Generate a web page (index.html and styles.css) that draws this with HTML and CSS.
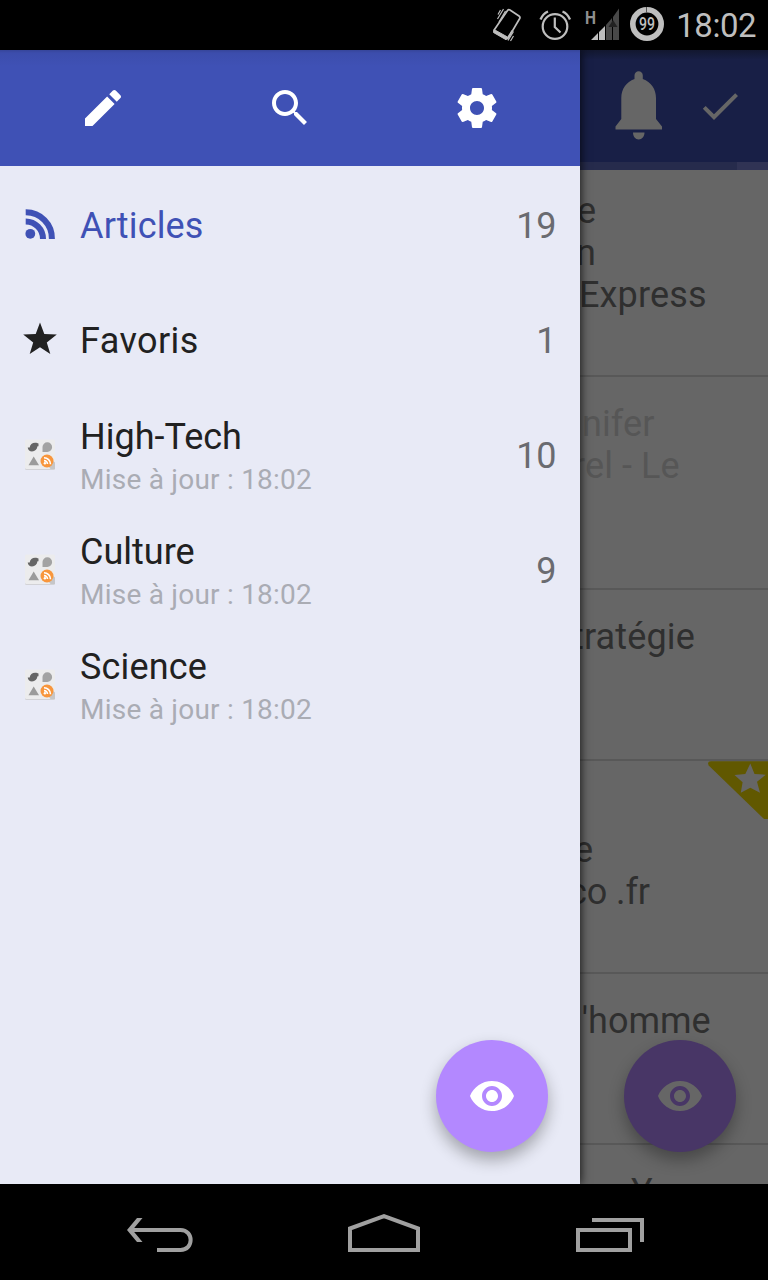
FILE: index.html
```html
<!DOCTYPE html>
<html lang="fr">
<head>
<meta charset="utf-8">
<title>Articles</title>
<link rel="stylesheet" href="styles.css">
</head>
<body>
<svg class="defs" width="0" height="0">
  <symbol id="eye" viewBox="0 0 24 24"><path d="M12 4.5C7 4.500 2.730 7.610 1 12c1.730 4.390 6 7.500 11 7.500s9.270-3.110 11-7.500c-1.730-4.390-6-7.500-11-7.500zM12 17c-2.760 0-5-2.240-5-5s2.240-5 5-5 5 2.240 5 5-2.240 5-5 5zm0-8c-1.660 0-3 1.340-3 3s1.340 3 3 3 3-1.340 3-3-1.340-3-3-3z"/></symbol>
  <symbol id="feed" viewBox="0 0 32 32">
    <rect x="1" y="1.500" width="30" height="29.500" rx="1.500" fill="#d2d2d6"/>
    <rect x="1" y="0.500" width="30" height="29.500" rx="1.500" fill="#ececed"/>
    <path d="M25 28l4-6 2 1.500V30h-4.500z" fill="#c6c6c8"/>
    <path d="M3.700 8.500h2C6 5.500 8.500 3.500 11.500 3.700c1.200 0 2 .6 3 .8v2.800h-1c-.5 3.200-2.500 5.200-5.500 5.200-2.200 0-4-1.500-4.300-4z" fill="#666"/>
    <path d="M18.500 12.900V8a4.800 4.800 0 1 1 4.800 4.900z" fill="#a3a3a3"/>
    <path d="M9.700 17.500l5.300 8.700H4.500z" fill="#9b9b9b"/>
    <circle cx="23" cy="22" r="6.500" fill="#f8963c"/>
    <g fill="none" stroke="#fff" stroke-width="1.600"><path d="M20 18.700a6.500 6.500 0 0 1 6.500 6.500M20 21.600a3.500 3.500 0 0 1 3.500 3.500"/></g>
    <circle cx="20.900" cy="24.300" r="1.200" fill="#fff"/>
  </symbol>
</svg>
<div class="screen">
  <header class="status">
    <svg class="s-phone" width="30" height="50" viewBox="492 0 30 50">
      <path d="M507.500 10.500Q508.500 9.200 510 10L519 16Q520.500 17 519.700 18.500L508.500 37.500Q507.500 39.200 506 38.300L495 32Q493.600 31 494.500 29.500z" fill="none" stroke="#bebebe" stroke-width="1.700"/>
      <path d="M494 29.500L507.500 37 506 39.700 493.500 32.500z" fill="#bebebe" stroke="#bebebe"/>
      <path d="M497.500 19l6-10M499 22l6.500-11M498 14.500l2.500-4.500M508 40.500l5.500-9M510.500 41l3-5M506.500 39.500l5.500-9" fill="none" stroke="#bebebe" stroke-width="1.200"/>
    </svg>
    <svg class="s-alarm" width="34" height="50" viewBox="538 0 34 50" fill="none" stroke="#bebebe">
      <circle cx="555" cy="26.500" r="12.300" stroke-width="2.200"/>
      <path d="M554.800 17.500v9.500l5.700 5.500" stroke-width="2.200"/>
      <path d="M540.500 19.500q2.500-6 7.500-8M570 19.500q-2.500-6-7.500-8" stroke-width="2.300"/>
    </svg>
    <svg class="s-signal" width="36" height="50" viewBox="584 0 36 50">
      <text class="net" x="585" y="23.500" textLength="11" lengthAdjust="spacingAndGlyphs">H</text>
      <path d="M591 40l7-7v7zM599 32l6-6v14h-6z" fill="#bebebe"/>
      <path d="M606 25l6-7v22h-6zM613 17l6-8.500V40h-6z" fill="#484848"/>
      <path d="M613 20l-4.500 7h9z" fill="#222"/>
    </svg>
    <svg class="s-batt" width="36" height="50" viewBox="629 0 36 50">
      <circle cx="647" cy="24" r="14.200" fill="none" stroke="#bebebe" stroke-width="5.600"/>
      <path d="M646.500 7v6" stroke="#555" stroke-width="1"/>
      <text class="pct" x="647" y="29.800" text-anchor="middle" textLength="16" lengthAdjust="spacingAndGlyphs">99</text>
    </svg>
    <span class="clock">18:02</span>
  </header>

  <main class="stage">
    <aside class="drawer">
      <div class="tools">
        <svg width="48" height="48" viewBox="0 0 24 24"><path d="M3 17.250V21h3.750L17.810 9.940l-3.750-3.750L3 17.250zM20.710 7.040c.39-.39.39-1.020 0-1.410l-2.340-2.340c-.39-.39-1.020-.39-1.410 0l-1.830 1.830 3.750 3.750 1.830-1.830z"/></svg>
        <svg width="48" height="48" viewBox="0 0 24 24"><path d="M15.500 14h-.79l-.28-.27C15.410 12.590 16 11.110 16 9.500 16 5.910 13.090 3 9.500 3S3 5.910 3 9.500 5.910 16 9.500 16c1.610 0 3.090-.59 4.230-1.570l.27.28v.79l5 4.990L20.490 19l-4.990-5zm-6 0C7.010 14 5 11.990 5 9.500S7.010 5 9.500 5 14 7.010 14 9.500 11.990 14 9.500 14z"/></svg>
        <svg width="48" height="48" viewBox="0 0 24 24"><path d="M19.430 12.980c.04-.32.07-.64.07-.98s-.03-.66-.07-.98l2.110-1.650c.19-.15.24-.42.12-.64l-2-3.460c-.12-.22-.39-.3-.61-.22l-2.490 1c-.52-.4-1.080-.73-1.690-.98l-.38-2.650C14.460 2.180 14.250 2 14 2h-4c-.25 0-.46.18-.49.42l-.38 2.650c-.61.25-1.170.59-1.690.98l-2.490-1c-.23-.09-.49 0-.61.22l-2 3.460c-.13.22-.07.49.12.64l2.110 1.650c-.04.32-.07.65-.07.98s.03.66.07.98l-2.110 1.650c-.19.15-.24.42-.12.64l2 3.460c.12.22.39.3.61.22l2.490-1c.52.4 1.080.73 1.690.98l.38 2.650c.03.24.24.42.49.42h4c.25 0 .46-.18.49-.42l.38-2.650c.61-.25 1.170-.59 1.690-.98l2.490 1c.23.09.49 0 .61-.22l2-3.460c.12-.22.07-.49-.12-.64l-2.110-1.650zM12 15.500c-1.930 0-3.500-1.570-3.500-3.500s1.570-3.500 3.500-3.500 3.500 1.570 3.500 3.500-1.570 3.500-3.500 3.500z"/></svg>
      </div>
      <ul class="menu">
        <li class="item active">
          <svg class="ico" width="32" height="32" viewBox="24 208 32 32"><circle cx="30.300" cy="233.800" r="4.900" fill="#3f51b5"/><path d="M25.700 221.500a17.300 17.300 0 0 1 17.300 17.500M25.700 212.300a26 26 0 0 1 26.200 26.700" fill="none" stroke="#3f51b5" stroke-width="6"/></svg>
          <div class="label"><span class="title">Articles</span></div><span class="count">19</span>
        </li>
        <li class="item">
          <svg class="ico star" width="34" height="34" viewBox="23 322 34 34"><path d="M40 322.500l4.300 11.600 12.500.4-10 7.900 3.500 11.600L40 347.300 29.700 354l3.500-11.600-10-7.900 12.500-.4z" fill="#212121"/></svg>
          <div class="label"><span class="title fav">Favoris</span></div><span class="count">1</span>
        </li>
        <li class="item">
          <svg class="ico feed" width="32" height="32"><use href="#feed"/></svg>
          <div class="label"><span class="title tight">High-Tech</span><span class="sub">Mise à jour : 18:02</span></div><span class="count">10</span>
        </li>
        <li class="item">
          <svg class="ico feed" width="32" height="32"><use href="#feed"/></svg>
          <div class="label"><span class="title tight">Culture</span><span class="sub">Mise à jour : 18:02</span></div><span class="count">9</span>
        </li>
        <li class="item">
          <svg class="ico feed" width="32" height="32"><use href="#feed"/></svg>
          <div class="label"><span class="title">Science</span><span class="sub">Mise à jour : 18:02</span></div>
        </li>
      </ul>
      <div class="fab"><svg width="48" height="48"><use href="#eye"/></svg></div>
    </aside>

    <section class="content">
      <div class="appbar">
        <svg width="48" height="70" viewBox="615 71 48 70"><path d="M634.500 79v-3.500a4 4 0 0 1 8.300 0V79C651 82 656 89 656 98v21l6 7.500v3h-46.500v-3l5.800-7.500V98c0-9 5-16 13.200-19zM633 132.500h11.500c0 4-2.500 7-5.800 7s-5.700-3-5.700-7z" fill="#666"/></svg>
        <svg width="48" height="48" viewBox="0 0 24 24"><path d="M9 16.170L4.830 12l-1.420 1.410L9 19 21 7l-1.410-1.410z" fill="#666"/></svg>
      </div>
      <div class="progress"><i></i></div>
      <div class="row first"><p class="k1">e</p><p class="k2">n</p><p class="k3">Express</p></div>
      <div class="row tall read"><p class="k4">nifer</p><p class="k5">rel - Le</p></div>
      <div class="row"><p class="k6">tratégie</p></div>
      <div class="row tall">
        <svg class="ribbon" width="60" height="58" viewBox="708 761 60 58"><path d="M711 761.300h57V819h-4L708.700 765.500q-1.800-4.200 2.300-4.200z" fill="#615800"/><path d="M750.300 763.500l4.200 10.600 11.300.6-8.800 7.100 3 10.900-9.700-5-9.500 5 1.800-10.500-8.100-7.300 10.800-.8z" fill="#666"/></svg>
        <p>&nbsp;</p><p class="k7">e</p><p class="k8">co .fr</p>
      </div>
      <div class="row"><p class="k9">l'homme</p></div>
      <div class="row"><p class="k10">Y</p></div>
      <div class="fab dim"><svg width="48" height="48"><use href="#eye"/></svg></div>
    </section>
  </main>

  <nav class="nav">
    <svg width="68" height="38" viewBox="126 1216 68 38" fill="none" stroke="#a0a0a0" stroke-width="4"><path d="M157 1250h23.500c13.500 0 13.500-20 0-20H131"/><path d="M127 1230l10-12h5.500l-10 12 10 12H137z" fill="#a0a0a0" stroke="none"/></svg>
    <svg class="home" width="72" height="44" viewBox="348 1213 72 44" fill="none" stroke="#a0a0a0" stroke-width="4"><path d="M350 1250v-21.500l34-12.300 34 12.300v21.500z"/></svg>
    <svg width="68" height="36" viewBox="576 1217 68 36" fill="none" stroke="#a0a0a0" stroke-width="4"><path d="M578 1230h52v20h-52zM592 1220h50v22"/></svg>
  </nav>
</div>
</body>
</html>
```
FILE: styles.css
```css
* { box-sizing: border-box; }
body { margin: 0; background: #000; font-family: Roboto, "Noto Sans", sans-serif; }
svg { display: block; flex: none; }
.defs { position: absolute; }
p, ul { margin: 0; padding: 0; list-style: none; }

.screen { width: 768px; height: 1280px; display: flex; flex-direction: column; overflow: hidden; }

.status { height: 50px; display: flex; align-items: center; justify-content: flex-end; padding-right: 12px; background: #000; color: #bebebe; }
.s-phone { margin-right: 16px; }
.s-alarm { margin-right: 12px; }
.s-signal { margin-right: 9px; }
.clock { width: 91px; text-align: right; font-size: 33px; line-height: 50px; padding-top: 2px; letter-spacing: -0.5px; }
.net { font-size: 19px; font-weight: 700; fill: #8f8f8f; }
.pct { font-size: 18px; font-weight: 500; fill: #bebebe; }

.stage { height: 1134px; display: grid; grid-template-columns: 580px 188px; overflow: hidden; }

.drawer { position: relative; z-index: 1; background: #e8eaf6; box-shadow: 1px 0 9px rgba(0, 0, 0, .75); }
.tools { height: 116px; display: flex; align-items: center; gap: 139px; padding-left: 79px; background: linear-gradient(#36459a, #3c4dac 3px, #3f51b5 16px); fill: #fff; }
.menu { padding-top: 2px; }
.item { height: 115px; display: flex; align-items: center; padding: 0 24px; color: #212121; }
.ico { margin: 0 24px 3px 0; }
.feed { margin-bottom: 1px; }
.star { margin: 0 23px 3px -1px; }
.label { flex: 1; display: flex; flex-direction: column; }
.title { font-size: 36px; line-height: 42px; letter-spacing: 0.15px; }
.tight { letter-spacing: 0; }
.fav { letter-spacing: 0.4px; }
.sub { font-size: 28px; line-height: 33px; margin-top: 5px; color: #aaacb4; letter-spacing: 0.23px; }
.active .title { color: #3f51b5; }
.count { font-size: 36px; line-height: 42px; color: #6a6b70; letter-spacing: -0.4px; }

.fab { position: absolute; right: 32px; bottom: 32px; width: 112px; height: 112px; border-radius: 50%; display: grid; place-items: center; background: #b388ff; fill: #fff; box-shadow: 0 8px 16px rgba(0, 0, 0, .3); }
.dim { background: #483666; fill: #666; }

.content { position: relative; overflow: hidden; background: #666; color: #2f2f2f; }
.appbar { height: 112px; display: flex; align-items: center; gap: 33px; padding-left: 35px; background: linear-gradient(#12172f, #181f46 10px); }
.progress { height: 8px; background: #262b4c; display: flex; justify-content: flex-end; }
.progress i { width: 31px; background: #303354; }
.row { position: relative; height: 171px; padding-top: 26px; border-bottom: 2px solid #585858; font-size: 36px; line-height: 42px; white-space: nowrap; }
.first { height: 207px; padding-top: 20px; }
.tall { height: 213px; }
.read { color: #565656; }
.ribbon { position: absolute; top: 0; right: 0; }
.k1 { margin-left: -3px; }
.k2 { margin-left: -4px; }
.k3 { margin-left: -1px; letter-spacing: 0.15px; }
.k4 { margin-left: 2px; letter-spacing: 0.1px; }
.k5 { margin-left: -7px; letter-spacing: 0.1px; }
.k6 { margin-left: -8px; letter-spacing: 0.15px; }
.k7 { margin-left: -6px; }
.k8 { margin-left: -12px; letter-spacing: -0.1px; }
.k9 { margin-left: -7px; }
.k10 { margin-left: 51px; }

.nav { height: 96px; display: flex; align-items: center; justify-content: space-between; padding: 6px 124px 0 126px; background: #000; }
.home { margin-right: 2px; }
```
